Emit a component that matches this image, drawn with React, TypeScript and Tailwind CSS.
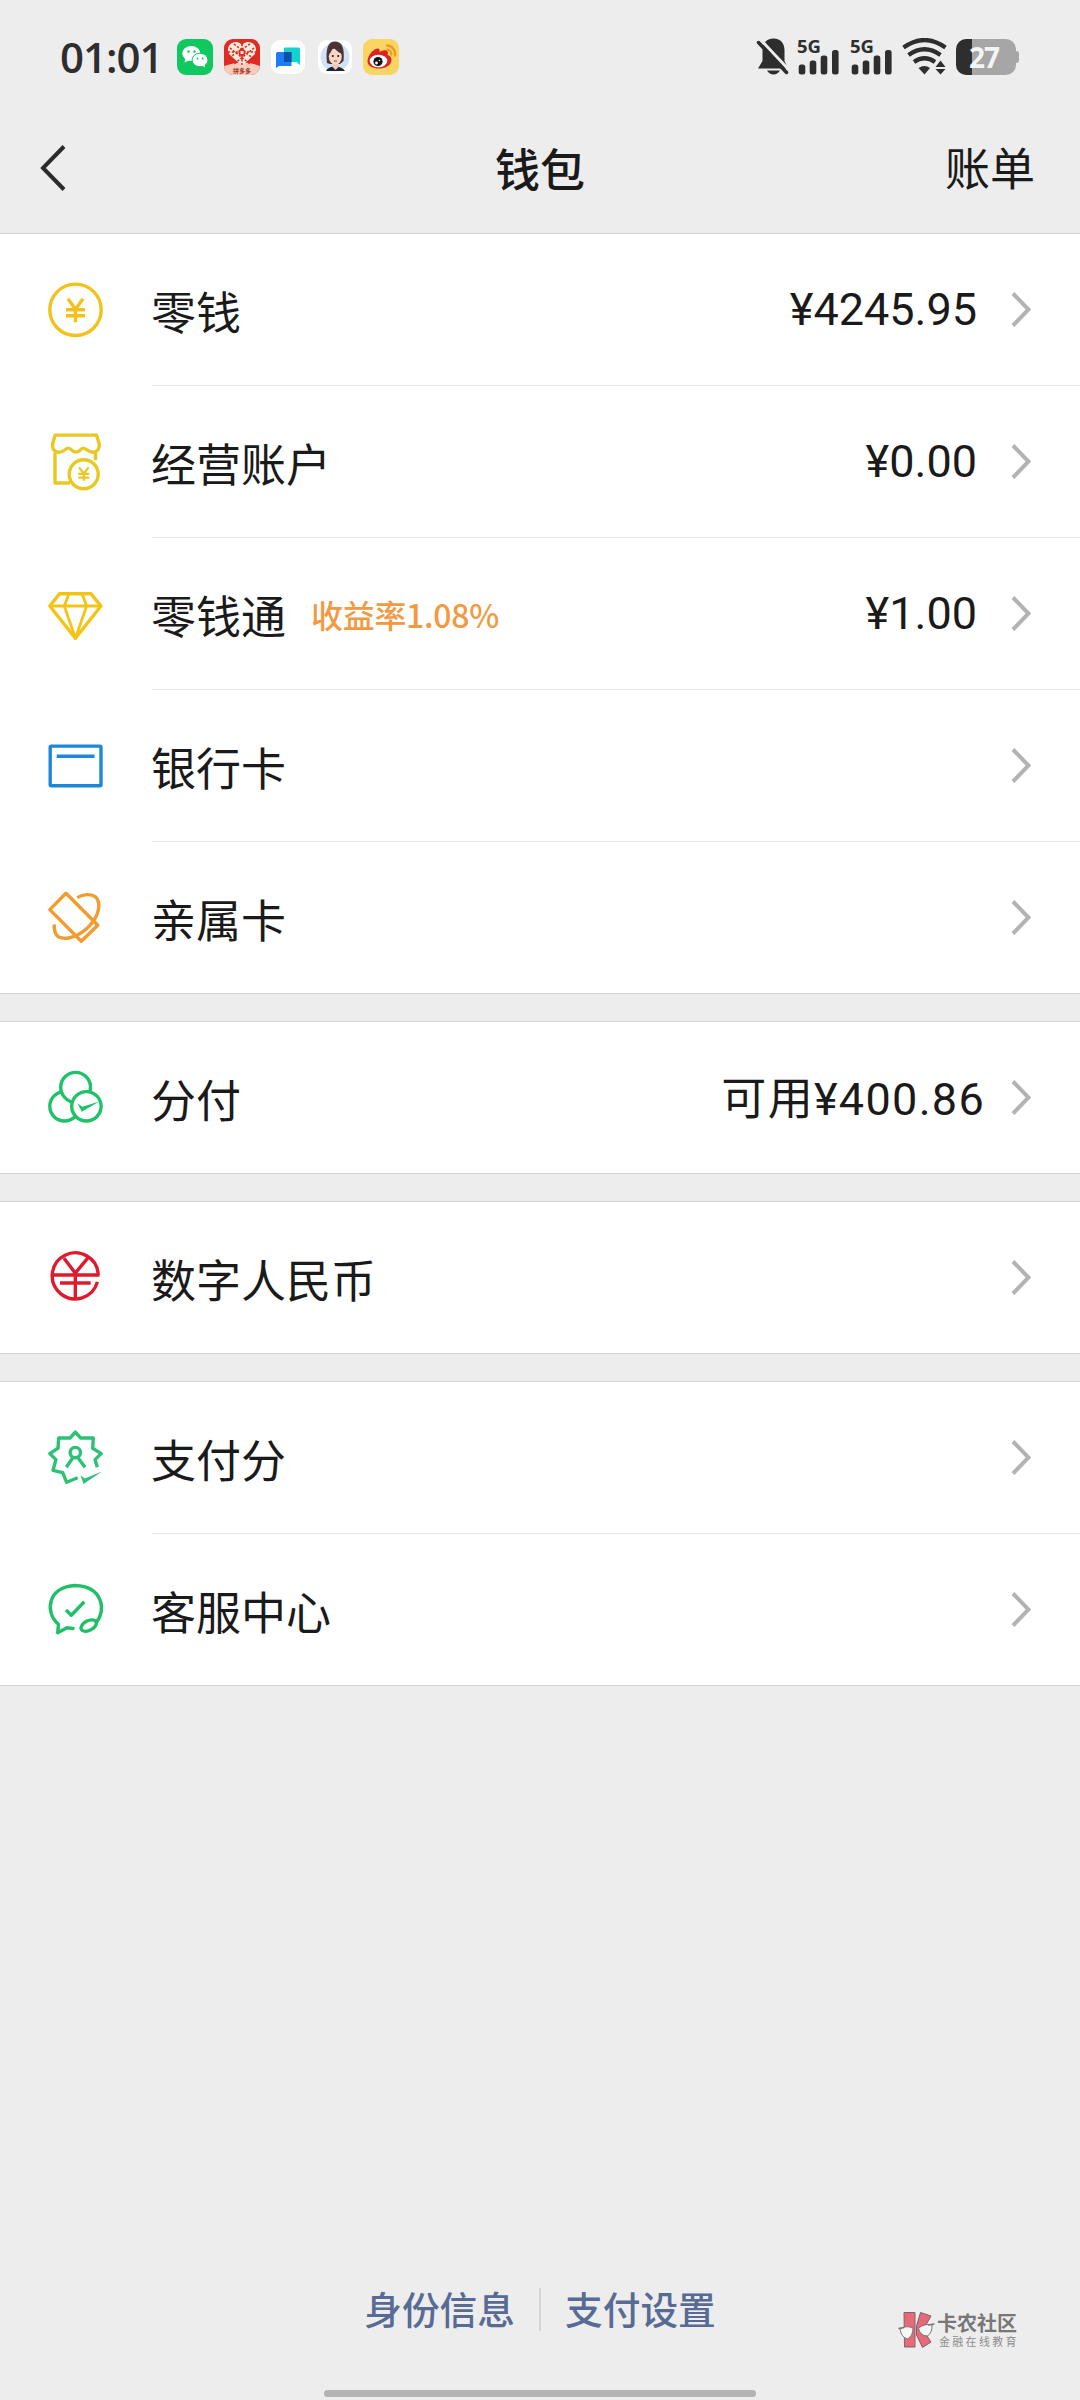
import React from 'react';
import clsx from 'clsx';

type IconProps = { children: React.ReactNode; color: string };

const LineIcon: React.FC<IconProps> = ({ children, color }) => (
  <svg
    width="61"
    height="61"
    viewBox="0 0.7 61 61"
    fill="none"
    stroke={color}
    strokeWidth="3.4"
    strokeLinejoin="round"
    className="shrink-0"
  >
    {children}
  </svg>
);

const BalanceIcon = () => (
  <LineIcon color="#f2c21c">
    <circle cx="30.5" cy="30.5" r="25.700" />
    <path d="M23 19.500l7.500 10.500 7.500-10.500M30.500 29v14M21 30.500h19M21 36.500h19" />
  </LineIcon>
);

const ShopIcon = () => (
  <LineIcon color="#eac822">
    <path d="M10 21.500V51.700H25M50.500 21.500V29" />
    <path d="M10 3.800H51.500L54.300 13C54.600 17.500 52 21 48 21C43.500 21 40.500 16.800 38.300 16.800S34.500 20.800 30.800 20.800S25.800 16.800 23.300 16.800S18.500 21 14 21S6.900 17.500 7.600 13Z" />
    <circle cx="38.7" cy="43" r="14.500" />
    <path strokeWidth="2.2" d="M34 36l4.800 6.200 4.800-6.200M38.800 42v7.500M33.300 42.600h11M33.300 46.400h11" />
  </LineIcon>
);

const DiamondIcon = () => (
  <LineIcon color="#f3c417">
    <path d="M14.500 10.500H46L56 22.700 30.400 55 4.800 22.700Z" />
    <path strokeWidth="2.800" d="M5 22.700H56M24 10.500L19.300 22.700 30.400 55 41.700 22.700 37 10.500" />
  </LineIcon>
);

const BankCardIcon = () => (
  <LineIcon color="#1e88d8">
    <rect x="5.2" y="10.8" width="50.8" height="39.6" rx="1" />
    <path d="M11.700 21H49.500" />
  </LineIcon>
);

const FamilyCardIcon = () => (
  <LineIcon color="#f29c2f">
    <path d="M21 7L4.800 23.300 36.300 55 52.800 39Z" />
    <path d="M32.300 11.300C38 8 46 7 50.500 10.500C57 17 53.500 30 44.500 39.500C34 50.500 20.500 54.500 13.500 50.500C9.500 47.500 9 42 9.300 38" />
  </LineIcon>
);

const FenfuIcon = () => (
  <LineIcon color="#1fc169">
    <circle cx="19.5" cy="40" r="14.7" />
    <circle cx="30.6" cy="21" r="14.9" fill="#fff" />
    <circle cx="41.4" cy="40" r="14.7" fill="#fff" />
    <path d="M32.500 37L36.800 45.500 54.300 35.200 37.300 40.500Z" fill="#1fc169" stroke="none" />
  </LineIcon>
);

const DigitalYuanIcon = () => (
  <LineIcon color="#e01a2e">
    <path d="M54.500 28.700H7.500M53.200 28.700A23 23 0 1 0 52.400 35.600M15 36.700H45.700M30.300 53V26.500M19 12L30.300 26.800 42.500 12" />
  </LineIcon>
);

const ScoreIcon = () => (
  <LineIcon color="#2cc275">
    <path d="M32.700 50.500L21.700 55 17.700 45.300 8 43 11 32.300 4.800 26.300 13 21 13.700 10.700 25 10.700 30.300 4.800 35.700 10.700 48.300 10.700 47.700 21 56.200 26.300 50 32.300 52.300 40" />
    <circle cx="30.3" cy="25.3" r="5.2" />
    <path d="M28 30.200L21.300 40M32.800 30.200L40 40" />
    <path d="M35.500 48L38.500 56.800 57 44.300 39.800 51.200Z" fill="#2cc275" stroke="none" />
  </LineIcon>
);

const ServiceIcon = () => (
  <LineIcon color="#20bf68">
    <path d="M29.500 50.300L22 49.500 12.700 54.500 13.500 46C-1 34 3 8 30.300 7.200C58 8 62 33 50.500 45" />
    <ellipse cx="43.7" cy="47.3" rx="8.3" ry="4.8" transform="rotate(-28 43.7 47.3)" />
    <path d="M21 31.700L26.300 37 39.300 23.500" />
  </LineIcon>
);

const sections = [
  [
    { icon: BalanceIcon, label: '零钱', value: '¥4245.95' },
    { icon: ShopIcon, label: '经营账户', value: '¥0.00' },
    { icon: DiamondIcon, label: '零钱通', note: '收益率1.08%', value: '¥1.00' },
    { icon: BankCardIcon, label: '银行卡' },
    { icon: FamilyCardIcon, label: '亲属卡' },
  ],
  [{ icon: FenfuIcon, label: '分付', value: '可用¥400.86', wide: true }],
  [{ icon: DigitalYuanIcon, label: '数字人民币' }],
  [
    { icon: ScoreIcon, label: '支付分' },
    { icon: ServiceIcon, label: '客服中心' },
  ],
] as {
  icon: React.FC;
  label: string;
  note?: string;
  value?: string;
  wide?: boolean;
}[][];

const AppBadges = () => (
  <div className="flex items-center">
    {/* WeChat */}
    <svg width="36" height="36" viewBox="0 0 36 36">
      <rect width="36" height="36" rx="9" fill="#10c860" />
      <ellipse cx="14.3" cy="14.5" rx="9" ry="7.6" fill="#fff" />
      <path d="M8.500 19l-1 4.500 5-2.500z" fill="#fff" />
      <ellipse cx="23" cy="21" rx="8" ry="6.8" fill="#fff" stroke="#10c860" strokeWidth="1" />
      <path d="M25 26.500l3.200 2-.7-3.500z" fill="#fff" />
      <g fill="#10c860">
        <circle cx="11.5" cy="12.5" r="1.2" />
        <circle cx="17.5" cy="12.5" r="1.2" />
        <circle cx="20.5" cy="19.5" r="1" />
        <circle cx="25.7" cy="19.5" r="1" />
      </g>
    </svg>
    {/* Pinduoduo */}
    <svg width="36" height="36" viewBox="0 0 36 36" className="ml-[11px]">
      <rect width="36" height="36" rx="9" fill="#de2b23" />
      <path d="M0 27Q18 20 36 27A9 9 0 0 1 27 36H9A9 9 0 0 1 0 27Z" fill="#f6cdbb" />
      <path d="M18 27L5.500 15.500A7 7 0 0 1 18 6A7 7 0 0 1 30.500 15.500Z" fill="#fbe9dc" />
      <g fill="none" stroke="#d92a24" strokeWidth="1.5" strokeDasharray="2.2 1.6">
        <path d="M6 9L26 25M10 5L30 20M30 9L10 25M26 5L6 18M18 5V26M4 13H32" />
      </g>
      <circle cx="18" cy="13.5" r="3.5" fill="#de2b23" />
      <path d="M16.500 12h3v3h-3z" fill="#fbe9dc" />
      <text x="18" y="33.5" textAnchor="middle" fontSize="6" fontWeight="700" fill="#a6352b">拼多多</text>
    </svg>
    {/* Messenger with two overlapping bubbles */}
    <svg width="34" height="34" viewBox="0 0 34 34" className="ml-[11px]">
      <rect width="34" height="34" rx="9" fill="#fff" />
      <path d="M14 7.500h13.500a1.500 1.500 0 0 1 1.500 1.500v16l-3.500-3H13V8.500a1 1 0 0 1 1-1z" fill="#12d3cf" />
      <path d="M6.500 12h14v14H8l-3 2V13.500A1.500 1.500 0 0 1 6.500 12z" fill="#1f7af5" />
      <path d="M13 12h7.500v10H13z" fill="#0a50a8" />
    </svg>
    {/* Avatar */}
    <svg width="34" height="34" viewBox="0 0 34 34" className="ml-[13px]">
      <rect width="34" height="34" rx="9" fill="#fff" />
      <circle cx="17" cy="17" r="14.5" fill="#cfe2fa" />
      <path d="M9 23Q6.500 1.500 17 1.500T25.500 21L22 24H12Z" fill="#4b3434" />
      <path d="M8 31Q10 26.500 17 26.500T27 31Z" fill="#20252f" />
      <path d="M14.500 22h6v5l-3 3-3-3z" fill="#f3c7b2" />
      <ellipse cx="17.3" cy="16.500" rx="6.5" ry="8" fill="#f9d6c5" />
      <path d="M10.500 15Q14 12 14.500 6Q19 12 24 14L22.500 5H13Z" fill="#4b3434" />
      <circle cx="14.8" cy="16" r="1.1" fill="#2c2020" />
      <circle cx="20.2" cy="16" r="1.1" fill="#2c2020" />
      <path d="M16 21h3" stroke="#c9493f" strokeWidth="1.2" />
    </svg>
    {/* Weibo */}
    <svg width="36" height="36" viewBox="0 0 36 36" className="ml-[11px]">
      <rect width="36" height="36" rx="9" fill="#fbd561" />
      <path
        d="M4.500 22C5 16 11 9 15 9.500C17.500 10 16.500 13 16.500 13S23 9.500 24.500 12.500C25.500 14.500 24.500 16 24.500 16S29 17 28.500 21.500C28 27 21.500 29.500 16 29.500S4 27 4.500 22Z"
        fill="#dc2222"
      />
      <ellipse cx="15.5" cy="22" rx="8.8" ry="6.3" fill="#fff" />
      <circle cx="15" cy="22.5" r="4.6" fill="#111" />
      <circle cx="13.5" cy="24" r="1.4" fill="#fff" />
      <circle cx="16.5" cy="21.5" r=".8" fill="#fff" />
      <path
        d="M24 6.500A8.500 8.500 0 0 1 32 16.500M24.500 10.700A4.500 4.500 0 0 1 28.300 15.500"
        fill="none"
        stroke="#f29a1f"
        strokeWidth="2.3"
        strokeLinecap="round"
      />
    </svg>
  </div>
);

const Signal = ({ className }: { className?: string }) => (
  <svg width="43" height="57" viewBox="0 -10 43 57" fill="#2e2e2e" className={className}>
    <text x="0" y="14.5" fontSize="18" fontWeight="700" textLength="24" lengthAdjust="spacingAndGlyphs" className="font-['Open_Sans']">
      5G
    </text>
    <rect x="1.7" y="26.5" width="6.6" height="10" rx="2.5" />
    <rect x="12.7" y="22.5" width="6.6" height="14" rx="2.5" />
    <rect x="23.7" y="17.5" width="6.6" height="19" rx="2.5" />
    <rect x="35" y="12" width="6.6" height="24.5" rx="2.5" />
  </svg>
);

const StatusBar = () => (
  <div className="flex h-[113px] items-center justify-between px-[60px]">
    <div className="flex items-center">
      <span className="w-[117px] font-['Open_Sans',sans-serif] text-[42px] leading-none font-semibold tracking-[-1px] text-[#2e2e2e]">
        01:01
      </span>
      <AppBadges />
    </div>
    <div className="mr-px flex items-center">
      <svg width="33" height="37" viewBox="0 0 33 37">
        <path d="M17.500 0.500C25 .5 28.500 6 28.500 12V23L32 30.500H2L6.500 23V12C6.500 6 10 .5 17.500 .5Z" fill="#2e2e2e" />
        <path d="M11 32.500H24Q21.500 36.500 17.500 36.500T11 32.500Z" fill="#2e2e2e" />
        <path d="M4 1L34 33" stroke="#ededed" strokeWidth="3" />
        <path d="M2.500 4.500L30.500 34.500" stroke="#2e2e2e" strokeWidth="3.5" strokeLinecap="round" />
      </svg>
      <Signal className="ml-2" />
      <Signal className="ml-2.5" />
      <svg width="46" height="37" viewBox="0 0 46 37" className="ml-[9px]">
        <g fill="none" stroke="#2e2e2e" strokeWidth="4.2">
          <path d="M1.500 9.500Q22.500 -5.500 43.500 9.500" />
          <path d="M6.500 17Q22.500 5.500 38.500 17" />
          <path d="M12 24Q22.500 16.500 33 24" />
        </g>
        <path d="M16.500 30Q22.500 26 28 30L22.500 36.500Z" fill="#2e2e2e" />
        <path d="M38.500 22.500l5 6.500h-10zM38.500 36.500l5-5.500h-10z" fill="#2e2e2e" />
      </svg>
      <div className="ml-2 flex items-center">
        <div className="flex h-9 w-[60px] items-center overflow-hidden rounded-[10px] bg-[linear-gradient(90deg,#2e2e2e_16px,#a6a6a6_16px)] pl-[13px]">
          <span className="font-['Open_Sans',sans-serif] text-[28px] leading-none font-bold tracking-[-1px] text-[#f4f4f4]">27</span>
        </div>
        <div className="h-3 w-[3px] rounded-r-full bg-[#a6a6a6]" />
      </div>
    </div>
  </div>
);

const Watermark = () => (
  <div className="absolute top-[2311px] left-[898px] flex">
    <svg width="37" height="38" viewBox="0 0 37 38">
      <g fill="#e8697a" stroke="#7d6468" strokeWidth="1">
        <path d="M6 1.500H17V36H6.500Z" />
        <path d="M18.500 15L22.500 1.500 33 5 25 19 33 31 24.500 36.500 18.500 24Z" />
      </g>
      <path d="M2 18Q8 14 15 17Q15 25 9.500 28Q3 26 2 18Z" fill="#f6f6f6" stroke="#777" strokeWidth="1" />
      <path d="M20.500 17Q27 12 34 14Q34.500 21 29.500 25Q22 25 20.500 17Z" fill="#f6f6f6" stroke="#777" strokeWidth="1" />
      <path d="M.5 17.500L6 16.500M30 14L36.500 13" stroke="#777" strokeWidth="1.5" />
    </svg>
    <div className="ml-0.5 flex flex-col">
      <span className="text-[20px] leading-[23px] font-bold text-[#777]">卡农社区</span>
      <span className="ml-0.5 text-[11px] leading-[14px] tracking-[2.3px] text-[#8e8e8e]">金融在线教育</span>
    </div>
  </div>
);

const App: React.FC = () => {
  return (
    <div className="relative flex h-[2400px] w-[1080px] flex-col overflow-hidden bg-[#ededed] font-['Noto_Sans_CJK_SC',sans-serif] text-[#1a1a1a]">
      <StatusBar />

      <header className="grid h-[120px] grid-cols-3 items-center pr-[45px] pb-[10px] pl-10">
        <svg width="26" height="46" viewBox="0 0 26 46" fill="none" stroke="#2b2b2b" strokeWidth="4">
          <path d="M24 1.500L3 23 24 44.500" />
        </svg>
        <h1 className="pb-0.5 pl-[5px] text-center text-[45px] leading-none font-medium">钱包</h1>
        <span className="pb-1 text-right text-[45px] leading-none">账单</span>
      </header>

      <main className="flex flex-col gap-[27px]">
        {sections.map((rows, i) => (
          <section key={i} className="border-y border-[#d3d3d3] bg-white">
            {rows.map((row, j) => (
              <div key={row.label} className="flex items-center pl-[45px]">
                <row.icon />
                <div
                  className={clsx(
                    'ml-[46px] flex flex-1 items-center pr-[49px]',
                    j < rows.length - 1 ? 'h-[152px] border-b border-[#e4e4e4]' : 'h-[151px]'
                  )}
                >
                  <span className="-ml-px pt-px text-[45px] leading-none">{row.label}</span>
                  {row.note && (
                    <span className="ml-[25px] text-[32px] leading-none font-medium tracking-[-0.3px] text-[#f19a42]">{row.note}</span>
                  )}
                  {row.value && (
                    <span
                      className={clsx(
                        "ml-auto font-[Roboto,'Noto_Sans_CJK_SC',sans-serif] text-[45px] leading-none",
                        row.wide ? 'mr-[26px] pt-[3px] tracking-[1.3px]' : 'mr-[34px]'
                      )}
                    >
                      {row.value}
                    </span>
                  )}
                  <svg
                    width="20"
                    height="35"
                    viewBox="0 0 20 35"
                    fill="none"
                    stroke="#b2b2b2"
                    strokeWidth="4"
                    className={clsx(!row.value && 'ml-auto')}
                  >
                    <path d="M2 1.500L17.500 17.500 2 33.500" />
                  </svg>
                </div>
              </div>
            ))}
          </section>
        ))}
      </main>

      <footer className="mt-auto flex flex-col items-center pb-[3px]">
        <div className="flex items-center gap-6 text-[37.7px] leading-none font-medium text-[#576b95]">
          <span className="pb-[3px]">身份信息</span>
          <span className="h-[43px] w-0.5 bg-[#d4d4d4]" />
          <span className="pb-[3px]">支付设置</span>
        </div>
        <div className="mt-[59px] h-[7px] w-[432px] rounded-full bg-[#b3b3b3]" />
      </footer>

      <Watermark />
    </div>
  );
};

export default App;
